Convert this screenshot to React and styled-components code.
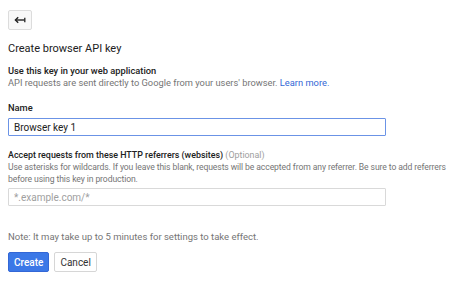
import React from 'react'
import styled, { createGlobalStyle } from 'styled-components'

const Global = createGlobalStyle`
  body {
    margin: 0;
    background: #ffffff;
    font-family: Roboto, "Liberation Sans", Arial, sans-serif;
    color: #212121;
  }
`

const Page = styled.div`
  width: 474px;
  height: 285px;
  box-sizing: border-box;
  padding: 10px 8px 0 8px;
  display: flex;
  flex-direction: column;
`

const BackButton = styled.button`
  width: 24px;
  height: 20px;
  padding: 0;
  border: 1px solid #dcdcdc;
  border-radius: 2px;
  background: #f8f8f8;
  display: flex;
  align-items: center;
  justify-content: center;
  cursor: pointer;
`

const Title = styled.h1`
  margin: 12px 0 0 0;
  font-size: 11px;
  font-weight: 400;
  color: #212121;
  line-height: 14px;
`

const Section = styled.div`
  margin-top: ${p => p.top || 0}px;
  display: flex;
  flex-direction: column;
`

const Label = styled.div`
  font-size: ${p => (p.compact ? 8.9 : 9.3)}px;
  font-weight: 500;
  color: #212121;
  line-height: 12px;
`

const Optional = styled.span`
  font-weight: 400;
  color: #9e9e9e;
`

const Help = styled.div`
  font-size: ${p => (p.compact ? 8.6 : 9.3)}px;
  letter-spacing: ${p => (p.compact ? -0.1 : 0)}px;
  color: #757575;
  line-height: 12px;
  white-space: nowrap;
`

const Link = styled.a`
  color: #3367d6;
  text-decoration: none;
`

const Input = styled.input`
  box-sizing: border-box;
  width: 378px;
  height: 18px;
  margin-top: ${p => p.top || 4}px;
  padding: 0 5px;
  border: 1px solid ${p => (p.focused ? '#6b93e6' : '#d9d9d9')};
  border-radius: 1px;
  font-family: inherit;
  font-size: 10px;
  color: #212121;
  outline: none;
  &::placeholder {
    color: #a0a0a0;
  }
`

const Note = styled.div`
  margin-top: 25px;
  font-size: 9.5px;
  color: #757575;
  line-height: 12px;
`

const Actions = styled.div`
  margin-top: 9px;
  display: flex;
  gap: 5px;
`

const Button = styled.button`
  height: 20px;
  padding: 0 5px;
  border-radius: 2px;
  font-family: inherit;
  font-size: 10px;
  font-weight: ${p => (p.primary ? 500 : 400)};
  color: ${p => (p.primary ? '#ffffff' : '#333333')};
  background: ${p => (p.primary ? '#3b78e7' : '#ffffff')};
  border: 1px solid ${p => (p.primary ? '#3367d6' : '#d6d6d6')};
  cursor: pointer;
`

const BackIcon = () => (
  <svg width="12" height="8" viewBox="0 0 12 8">
    <path d="M1.5 4 H10.5" stroke="#222" strokeWidth="1.4" fill="none" />
    <path d="M4.2 1.2 L1.4 4 L4.2 6.8" stroke="#222" strokeWidth="1.4" fill="none" />
    <path d="M10.8 1.8 V6.2" stroke="#222" strokeWidth="1.3" fill="none" />
  </svg>
)

const App = () => (
  <>
    <Global />
    <Page>
      <div>
        <BackButton aria-label="Back">
          <BackIcon />
        </BackButton>
      </div>
      <Title>Create browser API key</Title>
      <Section top={9}>
        <Label>Use this key in your web application</Label>
        <Help>
          API requests are sent directly to Google from your users' browser.{' '}
          <Link href="#">Learn more.</Link>
        </Help>
      </Section>
      <Section top={13}>
        <Label>Name</Label>
        <Input focused defaultValue="Browser key 1" />
      </Section>
      <Section top={13}>
        <Label compact>
          Accept requests from these HTTP referrers (websites) <Optional>(Optional)</Optional>
        </Label>
        <Help compact>
          Use asterisks for wildcards. If you leave this blank, requests will be accepted from any
          referrer. Be sure to add referrers
          <br />
          before using this key in production.
        </Help>
        <Input top={3} placeholder="*.example.com/*" />
      </Section>
      <Note>Note: It may take up to 5 minutes for settings to take effect.</Note>
      <Actions>
        <Button primary>Create</Button>
        <Button>Cancel</Button>
      </Actions>
    </Page>
  </>
)

export default App
